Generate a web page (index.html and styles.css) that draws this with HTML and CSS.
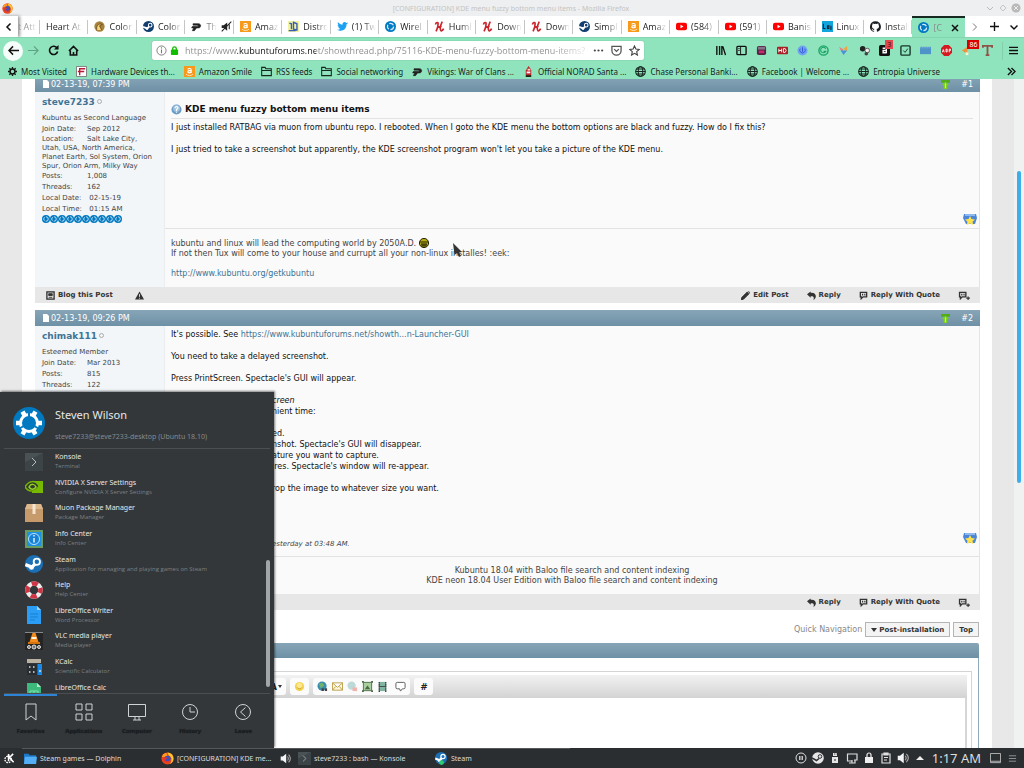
FILE: index.html
```html
<!DOCTYPE html>
<html lang="en">
<head>
    <meta charset="UTF-8">
    <meta name="viewport" content="width=device-width, initial-scale=1.0">
    <title>[CONFIGURATION] KDE menu fuzzy bottom menu items - Mozilla Firefox</title>
    <link rel="stylesheet" href="styles.css">
</head>
<body>
    <!-- shared icons -->
    <svg class="defs" aria-hidden="true">
        <symbol id="firefox" viewBox="0 0 16 16"><circle cx="8" cy="8" r="7.5" fill="#e8441f"/><path d="M8 .6a7.4 7.4 0 0 1 7.4 7.6c0 3-2 5.600-4.500 6.500C14 11 13.500 6 10 4.500 9 3 8 2 8 .6z" fill="#ffc72c"/><path d="M1 6C2 3 4 1.500 6.500 1L8 4l-3 2z" fill="#ff9a1f"/><circle cx="8" cy="8.300" r="3.800" fill="#3b50b8"/><path d="M3 7c2-1 3 0 5 0-1 2-2 1-3 3 2 2 5 1 6.500-.5C11 13 5 14 3 10z" fill="#e5352b"/></symbol>
        <symbol id="amazon" viewBox="0 0 16 16"><path d="M0 0h16v16H0z" fill="#f79a1c"/><path d="M5.500 5c.5-2 5-2 5 .5V10M10.300 6.300C7 6.300 5.500 7 5.500 8.500c0 2 3.500 2 4.800 0" fill="none" stroke="#fff" stroke-width="1.600"/><path d="M3 12c3 2.500 7 2.500 10 0" fill="none" stroke="#fff"/></symbol>
        <symbol id="steam" viewBox="0 0 16 16"><circle cx="8" cy="8" r="8" fill="#123f70"/><circle cx="10.500" cy="6" r="2.600" fill="none" stroke="#fff" stroke-width="1.500"/><path d="M0 8.500l6 2.300L9 8" fill="none" stroke="#fff" stroke-width="2.500"/><circle cx="5.800" cy="11" r="2" fill="#fff"/></symbol>
        <symbol id="steamblue" viewBox="0 0 16 16"><circle cx="8" cy="8" r="8" fill="#1b6fb5"/><circle cx="10.500" cy="6" r="2.800" fill="#1b6fb5" stroke="#fff" stroke-width="1.600"/><path d="M.3 8.500l5.700 2.300L9 8" fill="none" stroke="#fff" stroke-width="3"/><circle cx="5.800" cy="11" r="2.200" fill="#fff"/></symbol>
        <symbol id="pmark" viewBox="0 0 16 16"><path d="M3 4h8c4 0 4 6 0 6H8l-3 4H2l2-4H1L2 8h7c2 0 2-2 0-2H3z" fill="#222" stroke="#222"/></symbol>
        <symbol id="kubuntu" viewBox="0 0 32 32"><circle cx="16" cy="16" r="16" fill="#0079c1"/><circle cx="16" cy="16" r="8.500" fill="none" stroke="#fff" stroke-width="3"/><path d="M20.500 8.200L22.500 4.700M11.500 8.200L9.500 4.700M7 16H3M25 16h4M11.500 23.800l-2 3.500M20.500 23.800l2 3.500" stroke="#fff" stroke-width="4.500"/><path d="M16 5v5M6.500 21.500l4.300-2.500M25.500 21.500l-4.300-2.500" stroke="#0079c1" stroke-width="2"/></symbol>
        <symbol id="pip" viewBox="0 0 16 16"><circle cx="8" cy="8" r="8" fill="#0079c1"/><circle cx="8" cy="8" r="4.500" fill="none" stroke="#d5eafa" stroke-width="1.800" stroke-dasharray="7 2.400"/></symbol>
        <symbol id="humble" viewBox="0 0 16 16"><path d="M2 5c1-3 4-4 4-1 0 4-1 7-3 11M12 1c-2 4-4 10-2 13 1 1 3-1 4-3M5 9l6-1.500" fill="none" stroke="#c9252c" stroke-width="2.400"/></symbol>
        <symbol id="youtube" viewBox="0 0 16 16"><rect y="2.500" width="16" height="11" rx="3" fill="#f00"/><path d="M6.500 5.500v5l4.500-2.500z" fill="#fff"/></symbol>
        <symbol id="github" viewBox="0 0 16 16"><path fill="#1b1f23" d="M8 .2a8 8 0 0 0-2.500 15.600c.4 0 .5-.2.5-.4V14c-2.200.5-2.700-1-2.700-1-.4-.9-.9-1.200-.9-1.200-.7-.5.100-.5.100-.5.800.1 1.200.8 1.200.8.700 1.200 1.900.9 2.300.7 0-.5.300-.9.500-1.100-1.800-.2-3.600-.9-3.600-4 0-.9.300-1.600.8-2.100 0-.2-.4-1 .1-2.100 0 0 .7-.2 2.200.8a7.600 7.600 0 0 1 4 0c1.500-1 2.200-.8 2.200-.8.400 1.100.1 1.900.1 2.100.5.600.8 1.300.8 2.100 0 3.100-1.900 3.700-3.700 3.900.3.300.6.800.6 1.500v2.200c0 .2.100.5.600.4A8 8 0 0 0 8 .2z"/></symbol>
        <symbol id="globe" viewBox="0 0 16 16"><g fill="none" stroke="#16251e" stroke-width="1.500"><circle cx="8" cy="8" r="7"/><ellipse cx="8" cy="8" rx="3.300" ry="7"/><path d="M1 8h14M2 4.500h12M2 11.500h12"/></g></symbol>
        <symbol id="folderline" viewBox="0 0 16 16"><path d="M1 14V2h5l1 2h8v10zM1 6.500h14" fill="none" stroke="#16251e" stroke-width="1.500"/></symbol>
        <symbol id="page" viewBox="0 0 8 8"><path d="M1 0h4l2 2v6H1z" fill="#fff"/></symbol>
        <symbol id="greenup" viewBox="0 0 10 10"><path d="M0 0h10v3H0z" fill="#4fae18"/><path d="M5 2l4 3.500H7V10H3V5.500H1z" fill="#7ed321"/><path d="M5 4v5" stroke="#d4f59d"/></symbol>
        <symbol id="star" viewBox="0 0 14 13"><path d="M1 1h12l1 4-2 6H3L0 5z" fill="#4c86d8"/><path d="M2 1h10v2H2z" fill="#8db8f0"/><path d="M7 3l1.500 3 3.500.4-2.500 2.300.7 3.300L7 10.500 3.800 12l.7-3.300L2 6.400 5.500 6z" fill="#ffe14a"/></symbol>
        <symbol id="reply" viewBox="0 0 10 10"><path d="M0 3.500L4 .5V2c6-1 8 5 3 8 1.500-3 0-4.500-3-4v1.500z" fill="#333"/></symbol>
        <symbol id="quote" viewBox="0 0 10 10"><path d="M1.500 1.500h7v5h-4l-2 2v-2h-1z" fill="none" stroke="#333" stroke-width="1.500"/><path d="M4 3v2M6.500 3v2" stroke="#333" stroke-width="1.300"/></symbol>
        <symbol id="multi" viewBox="0 0 14 10"><path d="M1.500 1.500h7v5h-4l-2 2v-2h-1z" fill="none" stroke="#333" stroke-width="1.500"/><path d="M4 3v2M6.500 3v2" stroke="#333" stroke-width="1.300"/><path d="M9 8h4M11 6v4" stroke="#333" stroke-width="1.300"/></symbol>
        <symbol id="konsole" viewBox="0 0 18 18"><path d="M0 0h18v18H0z" fill="#4a5256"/><path d="M0 9L18 0v18H0z" fill="#3c4448"/><path d="M7 5l4 4-4 4" fill="none" stroke="#b8bfc2"/></symbol>
        <symbol id="volume" viewBox="0 0 16 16"><path d="M1 5h3l5-4v14l-5-4H1z" fill="#f5f5f5"/><path d="M11 5c1.500 2 1.500 4 0 6M12.500 2.500c3.300 3.500 3.300 7.500 0 11" fill="none" stroke="#aaa" stroke-width="1.500"/></symbol>
    </svg>

    <header class="titlebar">
        <svg class="i11"><use href="#firefox"/></svg>
        <span class="title">[CONFIGURATION] KDE menu fuzzy bottom menu items - Mozilla Firefox</span>
        <svg class="winbtns" viewBox="0 0 36 12"><path d="M2 5l3 3 3-3" fill="none" stroke="#bbb"/><path d="M18 3l3 3-3 3-3-3z" fill="none" stroke="#c4c4c4"/><circle cx="31" cy="6" r="4.500" fill="#b8b8b8"/><path d="M29 4l4 4M33 4l-4 4" stroke="#eee"/></svg>
    </header>

    <nav class="tabs" aria-label="Tabs">
        <button class="scroll" aria-label="Scroll left"><svg class="i8" viewBox="0 0 8 8"><path d="M5.500.5L2 4l3.500 3.500" fill="none" stroke="#111" stroke-width="1.500"/></svg></button>
        <a class="tab cut" href="#"><span>t Att</span></a>
        <a class="tab" href="#"><span>Heart At</span></a>
        <a class="tab" href="#"><svg class="i11" viewBox="0 0 16 16"><circle cx="8" cy="8" r="7.500" fill="#a8823b"/><path d="M4 13C3 7 6 3 12 5l-4 2 3 6" fill="#f6d57c" stroke="#4d3510"/></svg><span>Color</span></a>
        <a class="tab" href="#"><svg class="i11"><use href="#steam"/></svg><span>Color</span></a>
        <a class="tab" href="#"><svg class="i11"><use href="#pmark"/></svg><span class="dim">Th</span><svg class="i11" viewBox="0 0 16 16"><path d="M1 6h3l5-4v12l-5-4H1z" fill="#222"/><path d="M1 15L15 1M12 5v7" stroke="#222" stroke-width="1.500"/></svg></a>
        <a class="tab" href="#"><svg class="i11"><use href="#amazon"/></svg><span>Amaz</span></a>
        <a class="tab" href="#"><svg class="i11" viewBox="0 0 16 16"><path d="M0 0h16v16H0z" fill="#f2f3a0"/><path d="M2 3l3 1v8M8 2v10l5 1V4zM1 14h10" fill="none" stroke="#3a5bb8" stroke-width="2"/></svg><span>Distro</span></a>
        <a class="tab" href="#"><svg class="i11" viewBox="0 0 16 16"><path d="M15.500 3.500l-1.600 1.300C14 11 9 15 4 14c-1.500-.2-2.800-.7-3.800-1.300 2 .1 3.500-.4 4.700-1.400-1.500-.2-2.500-1-2.900-2.200h1.400C1.800 8.500 1 7.300 1 5.800l1.400.4C.9 5 .7 3.400 1.500 1.900c2 2.200 4 3.400 6.500 3.500C7.500 2 11.500.3 13.700 2.800l2-.8z" fill="#1da1f2"/></svg><span>(1) Tw</span></a>
        <a class="tab" href="#"><svg class="i11"><use href="#pip"/></svg><span>Wirel</span></a>
        <a class="tab" href="#"><svg class="i11"><use href="#humble"/></svg><span>Huml</span></a>
        <a class="tab" href="#"><svg class="i11"><use href="#humble"/></svg><span>Down</span></a>
        <a class="tab" href="#"><svg class="i11"><use href="#humble"/></svg><span>Down</span></a>
        <a class="tab" href="#"><svg class="i11"><use href="#steam"/></svg><span>Simpl</span></a>
        <a class="tab" href="#"><svg class="i11"><use href="#amazon"/></svg><span>Amaz</span></a>
        <a class="tab" href="#"><svg class="i11"><use href="#youtube"/></svg><span>(584)</span></a>
        <a class="tab" href="#"><svg class="i11"><use href="#youtube"/></svg><span>(591)</span></a>
        <a class="tab" href="#"><svg class="i11"><use href="#youtube"/></svg><span>Banis</span></a>
        <a class="tab" href="#"><svg class="i11" viewBox="0 0 16 16"><path d="M0 0h16v16H0z" fill="#12a5dc"/><path d="M2 4v7h3M8 7v4h2V7zM13 7v6" fill="none" stroke="#123" stroke-width="1.600"/></svg><span>Linux</span></a>
        <a class="tab" href="#"><svg class="i11"><use href="#github"/></svg><span>Install</span></a>
        <a class="tab active" href="#"><svg class="i11"><use href="#pip"/></svg><span class="dim">[C</span><svg class="i8" viewBox="0 0 8 8"><path d="M1 1l6 6M7 1L1 7" stroke="#111" stroke-width="1.500"/></svg></a>
        <div class="tabend">
            <button aria-label="Scroll right"><svg class="i8" viewBox="0 0 8 8"><path d="M2 .5L5.500 4 2 7.500" fill="none" stroke="#777"/></svg></button>
            <button aria-label="New tab"><svg class="i9" viewBox="0 0 10 10"><path d="M5 0v10M0 5h10" stroke="#111" stroke-width="1.500"/></svg></button>
            <button aria-label="List all tabs"><svg class="i8" viewBox="0 0 8 8"><path d="M.5 2.500L4 6l3.500-3.500" fill="none" stroke="#111" stroke-width="1.500"/></svg></button>
        </div>
    </nav>

    <div class="navbar">
        <button class="back" aria-label="Back"><svg class="i11" viewBox="0 0 12 12"><path d="M12 6H1M5.500 1.500L1 6l4.500 4.500" fill="none" stroke="#111" stroke-width="1.600"/></svg></button>
        <button aria-label="Forward"><svg class="i11" viewBox="0 0 12 12"><path d="M0 6h11M6.500 1.500L11 6l-4.500 4.500" fill="none" stroke="#5fa386" stroke-width="1.300"/></svg></button>
        <button aria-label="Reload"><svg class="i11" viewBox="0 0 12 12"><path d="M10 3.500A4.500 4.500 0 1 0 10.500 7" fill="none" stroke="#111" stroke-width="1.800"/><path d="M11.500 0v5h-5z" fill="#111"/></svg></button>
        <button aria-label="Home"><svg class="i11" viewBox="0 0 12 12"><path d="M1 6.500L6 1.500l5 5M2.500 6v5h7V6M6 11V7.500" fill="none" stroke="#111" stroke-width="1.700"/></svg></button>
        <form class="urlbar">
            <svg class="i11" viewBox="0 0 12 12"><circle cx="6" cy="6" r="5" fill="none" stroke="#777"/><path d="M6 5v4M6 2.500v1.300" stroke="#777" stroke-width="1.200"/></svg>
            <svg class="i9" viewBox="0 0 10 10"><rect x="1" y="4" width="8" height="6" rx="1" fill="#12bc00"/><path d="M3 5V3a2 2 0 0 1 4 0v2" fill="none" stroke="#12bc00" stroke-width="1.500"/></svg>
            <input type="text" aria-label="Address" value="https://www.kubuntuforums.net/showthread.php/75116-KDE-menu-fuzzy-bottom-menu-items?p">
            <svg class="i11" viewBox="0 0 12 12"><circle cx="2" cy="6" r="1.200" fill="#444"/><circle cx="6" cy="6" r="1.200" fill="#444"/><circle cx="10" cy="6" r="1.200" fill="#444"/></svg>
            <svg class="i11" viewBox="0 0 12 12"><path d="M1 1.500h10V6a5 5 0 0 1-10 0zM3.500 4.500L6 7l2.500-2.500" fill="none" stroke="#555" stroke-width="1.400"/></svg>
            <svg class="i11" viewBox="0 0 12 12"><path d="M6 1l1.500 3.400 3.700.4-2.800 2.500.8 3.700L6 9.100 2.800 11l.8-3.700L.8 4.800l3.700-.4z" fill="none" stroke="#444" stroke-width="1.200"/></svg>
        </form>
        <div class="tools">
            <svg viewBox="0 0 12 12"><path d="M2 1v10M5 1v10M7.500 1v10M8.500 1.500L11.500 11" stroke="#111" stroke-width="1.500"/></svg>
            <svg viewBox="0 0 12 12"><rect x="1" y="1.500" width="10" height="9" rx="1" fill="none" stroke="#111" stroke-width="1.500"/><path d="M5 2v9M2.500 4H4M2.500 6H4" stroke="#111"/></svg>
            <svg viewBox="0 0 12 12"><rect x="1" y="1" width="10" height="10" rx="2" fill="#53253f"/><path d="M2 2h8v3H2z" fill="#85758a"/><path d="M3 6h6v3H3z" fill="#c52a72"/></svg>
            <svg viewBox="0 0 12 12"><rect y="2" width="12" height="8" rx="1" fill="#a81e26"/><path d="M2 4v4M5 4v4M2 6h3M7 4v4h2l1-2-1-2z" fill="none" stroke="#fff"/></svg>
            <svg viewBox="0 0 12 12"><circle cx="6" cy="6" r="5.500" fill="#6fa3f0"/><path d="M6 2.500v5M3.500 4a3 3 0 1 0 5 0" fill="none" stroke="#3154d6"/></svg>
            <svg viewBox="0 0 12 12"><circle cx="6" cy="6" r="5" fill="none" stroke="#17a367" stroke-width="1.500"/><path d="M8.500 4A3 3 0 1 0 8.500 7H6" fill="none" stroke="#17a367" stroke-width="1.200"/></svg>
            <svg viewBox="0 0 12 12"><path d="M1 2l5 3-2 3z" fill="#ed7a86"/><path d="M6 4l4-3v6z" fill="#f2a33c"/><path d="M3 6h7l-4 5z" fill="#4c91dc"/></svg>
            <svg viewBox="0 0 12 12"><circle cx="4" cy="4" r="3" fill="#222"/><circle cx="9" cy="6" r="2.500" fill="#eee" stroke="#555"/><circle cx="8" cy="9.500" r="2" fill="#444"/></svg>
            <span class="ext"><svg viewBox="0 0 12 12"><rect width="12" height="12" rx="2" fill="#111"/><path d="M4 3.500h4V9M8 6H4.500v2.500H8" fill="none" stroke="#fff" stroke-width="1.500"/></svg><b class="badge pink">3</b></span>
            <svg viewBox="0 0 12 12"><rect x="1" y="1" width="10" height="10" rx="1" fill="none" stroke="#14362a" stroke-width="1.500"/><path d="M3.500 6l2 2 3-4" fill="none" stroke="#14362a"/></svg>
            <svg viewBox="0 0 12 12"><path d="M0 2h12v8H0z" fill="#4f94c8"/><path d="M0 3h12" stroke="#91c1e1" stroke-dasharray="1 1"/></svg>
            <svg viewBox="0 0 12 12"><path d="M3.500 0h5L12 3.500v5L8.500 12h-5L0 8.500v-5z" fill="#d31a20"/><path d="M1.500 8l1-3 1 3M5.500 4.500v3h1.200v-3zM9 8V4.500h1.300V6H9" fill="none" stroke="#fff"/></svg>
            <span class="ext"><svg viewBox="0 0 12 12"><path d="M1 6l6-4v8z" fill="#f0933e"/><path d="M5 8h3v3H5z" fill="#fff0cc"/></svg><b class="badge">86</b></span>
            <svg viewBox="0 0 12 12"><path d="M1 3V1h10v2M6 1v10M4 11h4" fill="none" stroke="#8e5248" stroke-width="2"/></svg>
        </div>
        <button class="burger" aria-label="Menu"><svg class="i9" viewBox="0 0 10 10"><path d="M0 1.500h10M0 5h10M0 8.500h10" stroke="#111" stroke-width="1.400"/></svg></button>
    </div>

    <nav class="bookmarks" aria-label="Bookmarks">
        <a href="#"><svg class="i9" viewBox="0 0 10 10"><circle cx="5" cy="5" r="2.700" fill="none" stroke="#111" stroke-width="1.600"/><path d="M5 0v2M5 8v2M0 5h2M8 5h2M1.500 1.500l1.300 1.300M7.200 7.200l1.300 1.300M8.500 1.500L7.200 2.800M2.800 7.200L1.500 8.500" stroke="#111" stroke-width="1.500"/></svg>Most Visited</a>
        <a href="#"><svg class="i11" viewBox="0 0 12 12"><path d="M.5.5h11v11H.5z" fill="#fff" stroke="#777"/><path d="M4 10V3h6M2 6h7" fill="none" stroke="#b81d38" stroke-width="1.500"/></svg>Hardware Devices th...</a>
        <a href="#"><svg class="i11"><use href="#amazon"/></svg>Amazon Smile</a>
        <a href="#"><svg class="i11"><use href="#folderline"/></svg>RSS feeds</a>
        <a href="#"><svg class="i11"><use href="#folderline"/></svg>Social networking</a>
        <a href="#"><svg class="i11"><use href="#pmark"/></svg>Vikings: War of Clans ...</a>
        <a href="#"><svg class="i11" viewBox="0 0 12 12"><path d="M6 0l3 4v6l-3 2-3-2V5z" fill="#b7282e"/><path d="M5 3h3v2H5z" fill="#f5d8ca"/><path d="M4 6h4v2H4z" fill="#fff"/><path d="M3 10h6v2H3z" fill="#221"/></svg>Official NORAD Santa ...</a>
        <a href="#"><svg class="i11"><use href="#globe"/></svg>Chase Personal Banki...</a>
        <a href="#"><svg class="i11"><use href="#globe"/></svg>Facebook | Welcome ...</a>
        <a href="#"><svg class="i11"><use href="#globe"/></svg>Entropia Universe</a>
        <button class="more" aria-label="More bookmarks"><svg class="i9" viewBox="0 0 10 10"><path d="M1 1l4 4-4 4M5 1l4 4-4 4" fill="none" stroke="#111" stroke-width="1.500"/></svg></button>
    </nav>

    <div class="viewport">
        <main class="page">
            <article class="post">
                <div class="posthead"><svg class="i8"><use href="#page"/></svg><span>02-13-19, 07:39 PM</span><svg class="i9 up"><use href="#greenup"/></svg><a href="#">#1</a></div>
                <div class="postbody">
                    <aside class="user">
                        <a class="username" href="#">steve7233</a> <i class="offline"></i>
                        <p class="rank">Kubuntu as Second Language</p>
                        <p><span>Join Date:</span>Sep 2012</p>
                        <p class="where"><span>Location:</span>Salt Lake City, Utah, USA, North America, Planet Earth, Sol System, Orion Spur, Orion Arm, Milky Way</p>
                        <p><span>Posts:</span>1,008</p>
                        <p><span>Threads:</span>162</p>
                        <p><span>Local Date:</span> 02-15-19</p>
                        <p><span>Local Time:</span> 01:15 AM</p>
                        <div class="pips">
                            <svg><use href="#pip"/></svg><svg><use href="#pip"/></svg><svg><use href="#pip"/></svg><svg><use href="#pip"/></svg><svg><use href="#pip"/></svg><svg><use href="#pip"/></svg><svg><use href="#pip"/></svg><svg><use href="#pip"/></svg><svg><use href="#pip"/></svg><svg><use href="#pip"/></svg>
                        </div>
                    </aside>
                    <div class="message">
                        <div class="text first">
                            <h2><svg class="i11" viewBox="0 0 12 12"><circle cx="6" cy="6" r="5.500" fill="#6b9cc6"/><circle cx="6" cy="5" r="3.800" fill="#9dc0dd"/><path d="M4.500 4.500C4.500 2 8 2.500 7.500 4.500L6 6v1.500M6 8.500v1" fill="none" stroke="#fff" stroke-width="1.300"/></svg>KDE menu fuzzy bottom menu items</h2>
                            <p>I just installed RATBAG via muon from ubuntu repo. I rebooted. When I goto the KDE menu the bottom options are black and fuzzy. How do I fix this?</p>
                            <p>I just tried to take a screenshot but apparently, the KDE screenshot program won't let you take a picture of the KDE menu.</p>
                        </div>
                        <svg class="award"><use href="#star"/></svg>
                        <div class="sig">
                            kubuntu and linux will lead the computing world by 2050A.D. <svg class="smiley" viewBox="0 0 10 10"><circle cx="5" cy="5" r="4.600" fill="#b8ab14" stroke="#252505"/><path d="M1 4h8M2 6h6M3 8h4M3 6v2M5 6v2M7 6v2" stroke="#252505"/></svg><br>
                            If not then Tux will come to your house and currupt all your non-linux installes! :eek:<br><br>
                            <a href="#">http://www.kubuntu.org/getkubuntu</a>
                        </div>
                    </div>
                </div>
                <div class="postfoot">
                    <button><svg class="i9" viewBox="0 0 10 10"><rect x="1" y="1" width="8" height="8" fill="none" stroke="#333" stroke-width="1.500"/><path d="M3 3h4v2H3zM3 7h4" stroke="#333" fill="#333"/></svg>Blog this Post</button>
                    <button class="warn" aria-label="Report"><svg class="i9" viewBox="0 0 10 10"><path d="M5 .5L10 9.500H0z" fill="#333"/><path d="M5 3.500v3M5 7.500v1" stroke="#eee"/></svg></button>
                    <div class="right">
                        <button><svg class="i9" viewBox="0 0 10 10"><path d="M0 10l1-3 6-6 2 2-6 6zM8 0l2 2" fill="#333" stroke="#333"/></svg>Edit Post</button>
                        <button><svg class="i9"><use href="#reply"/></svg>Reply</button>
                        <button><svg class="i9"><use href="#quote"/></svg>Reply With Quote</button>
                        <button aria-label="Multi-quote"><svg class="wide"><use href="#multi"/></svg></button>
                    </div>
                </div>
            </article>

            <article class="post">
                <div class="posthead"><svg class="i8"><use href="#page"/></svg><span>02-13-19, 09:26 PM</span><svg class="i9 up"><use href="#greenup"/></svg><a href="#">#2</a></div>
                <div class="postbody">
                    <aside class="user">
                        <a class="username" href="#">chimak111</a> <i class="offline"></i>
                        <p class="rank">Esteemed Member</p>
                        <p><span>Join Date:</span>Mar 2013</p>
                        <p><span>Posts:</span>815</p>
                        <p><span>Threads:</span>122</p>
                        <p><span>Local Date:</span> 02-15-19</p>
                    </aside>
                    <div class="message">
                        <div class="text second">
                            <p>It's possible. See <a href="#">https://www.kubuntuforums.net/showth...n-Launcher-GUI</a></p>
                            <p>You need to take a delayed screenshot.</p>
                            <p>Press PrintScreen. Spectacle's GUI will appear.</p>
                            <!-- these lines run under the launcher -->
                            <div class="under">
                                <p><i>creen</i><br>nient time:</p>
                                <p>ed.<br>nshot. Spectacle's GUI will disappear.<br>ature you want to capture.<br>ires. Spectacle's window will re-appear.</p>
                                <p>rop the image to whatever size you want.</p>
                            </div>
                        </div>
                        <div class="edited"><i>esterday at 03:48 AM.</i><svg class="award"><use href="#star"/></svg></div>
                        <div class="sig center">Kubuntu 18.04 with Baloo file search and content indexing<br>KDE neon 18.04 User Edition with Baloo file search and content indexing</div>
                    </div>
                </div>
                <div class="postfoot">
                    <div class="right">
                        <button><svg class="i9"><use href="#reply"/></svg>Reply</button>
                        <button><svg class="i9"><use href="#quote"/></svg>Reply With Quote</button>
                        <button aria-label="Multi-quote"><svg class="wide"><use href="#multi"/></svg></button>
                    </div>
                </div>
            </article>

            <div class="quicknav">
                <span>Quick Navigation</span>
                <button><svg viewBox="0 0 6 4"><path d="M0 0h6L3 4z" fill="#333"/></svg>Post-installation</button>
                <button>Top</button>
            </div>

            <section class="quickreply">
                <div class="qrhead"></div>
                <div class="editor">
                    <div class="inner">
                        <div class="edbar">
                            <div class="grp"><button aria-label="Colour">A<svg viewBox="0 0 4 3"><path d="M0 0h4L2 3z" fill="#333"/></svg></button></div>
                            <div class="grp"><svg class="i11" viewBox="0 0 12 12"><circle cx="6" cy="6" r="5" fill="#f4d24e"/><circle cx="6" cy="5" r="3" fill="#fbe890"/><path d="M3.500 7c1 2 4 2 5 0" fill="none" stroke="#c9a43c"/></svg></div>
                            <div class="grp">
                                <svg class="i11" viewBox="0 0 12 12"><circle cx="5.500" cy="5.500" r="5" fill="#3b8eb0"/><path d="M2 3l4-1 2 3-4 3z" fill="#6fb36c"/><path d="M5 9.500h6" stroke="#444" stroke-width="3" stroke-dasharray="2.500 1"/></svg>
                                <svg class="i11" viewBox="0 0 12 12"><path d="M.5 2h11v8H.5zM.5 2L6 7l5.500-5M.5 10L4 6M11.500 10L8 6" fill="#fff8dc" stroke="#b99d45"/></svg>
                                <svg class="i11" viewBox="0 0 12 12"><circle cx="5" cy="5" r="4.500" fill="#bdd9d8"/><path d="M6 7h5v4H6z" fill="#efb3b0"/></svg>
                                <svg class="i11" viewBox="0 0 12 12"><path d="M1.500 1.500h9v9h-9z" fill="#a8cf9c" stroke="#4f6d48"/><path d="M3 9l3-4 3 4zM0 0h2v2H0zM10 0h2v2h-2zM0 10h2v2H0zM10 10h2v2h-2z" fill="#4b6848"/></svg>
                                <svg class="i11" viewBox="0 0 12 12"><path d="M2 1h8v10H2z" fill="#7fb4a1"/><path d="M2.500 1v11M9.500 1v11" stroke="#444" stroke-width="1.500" stroke-dasharray="1.500 .5"/><path d="M3 6h6" stroke="#444"/></svg>
                                <svg class="i11 say" viewBox="0 0 12 12"><path d="M2.500 1.500h7q1.500 0 1.500 1.500v4q0 1.500-1.500 1.500H8l-2 2.500-1-2.500H2.500Q1 8.500 1 7V3q0-1.500 1.500-1.500z" fill="#fff" stroke="#555"/></svg>
                            </div>
                            <div class="grp"><button aria-label="Code"><i>#</i></button></div>
                        </div>
                        <textarea aria-label="Quick reply"></textarea>
                    </div>
                </div>
            </section>
        </main>
        <div class="scrolltrack"><div class="thumb"></div></div>
    </div>

    <svg class="cursor" viewBox="0 0 10 15"><path d="M0 0l9 9-3 .5L8 13l-2 1-2-4-2.500 2z" fill="#333"/></svg>

    <section class="launcher" aria-label="Application launcher">
        <div class="who">
            <svg><use href="#kubuntu"/></svg>
            <div><h1>Steven Wilson</h1><p>steve7233@steve7233-desktop (Ubuntu 18.10)</p></div>
        </div>
        <div class="listwrap">
            <ul>
                <li><svg><use href="#konsole"/></svg><div>Konsole<small>Terminal</small></div></li>
                <li><svg viewBox="0 0 18 18"><path d="M7 3h11v12H7z" fill="#76b900"/><path d="M0 9c4-7 11-7 14-1-3 6-10 7-14 1z" fill="#313a2a" stroke="#76b900" stroke-width="1.500"/><path d="M4 9c2-4 6-3 7 0-2 3-5 3-7 0z" fill="none" stroke="#93d127" stroke-width="1.500"/></svg><div>NVIDIA X Server Settings<small>Configure NVIDIA X Server Settings</small></div></li>
                <li><svg viewBox="0 0 18 18"><path d="M2 0h14l2 5v13H0V5z" fill="#c79a6b"/><path d="M2 0h14l2 5H0z" fill="#ddb88d"/><path d="M7.500 0h3v10h-3z" fill="#f3e5cf"/></svg><div>Muon Package Manager<small>Package Manager</small></div></li>
                <li><svg viewBox="0 0 18 18"><path d="M0 0h18v18H0z" fill="#699b65"/><path d="M2 2h14v14H2z" fill="#2090e0"/><circle cx="9" cy="9" r="5.500" fill="#1682d6" stroke="#b9e2ff"/><path d="M9 8v4.500M9 5v1.500" stroke="#fff" stroke-width="1.300"/></svg><div>Info Center<small>Info Center</small></div></li>
                <li><svg><use href="#steamblue"/></svg><div>Steam<small>Application for managing and playing games on Steam</small></div></li>
                <li><svg viewBox="0 0 18 18"><circle cx="9" cy="9" r="6.500" fill="none" stroke="#eee" stroke-width="4.500"/><circle cx="9" cy="9" r="6.500" fill="none" stroke="#cf3545" stroke-width="4.500" stroke-dasharray="6.200 4" stroke-dashoffset="3.100"/></svg><div>Help<small>Help Center</small></div></li>
                <li><svg viewBox="0 0 18 18"><path d="M2 0h10l4 4v14H2z" fill="#2b9df4"/><path d="M12 0v4h4z" fill="#9ed5ff"/><path d="M5 8h8M5 11h8M5 14h5" stroke="#1881cf"/></svg><div>LibreOffice Writer<small>Word Processor</small></div></li>
                <li><svg viewBox="0 0 18 18"><path d="M0 0h18v18H0z" fill="#252525"/><path d="M0 .5h18" stroke="#888"/><path d="M7.500 1h3l3 9h-9z" fill="#f28b1a"/><path d="M6.500 5h5v2h-5z" fill="#fff2dd"/><path d="M3 10h12v2H3z" fill="#d6720e"/><g fill="#777" stroke="#ddd"><circle cx="4" cy="15" r="1.500"/><circle cx="9" cy="15" r="2"/><circle cx="14" cy="15" r="1.500"/></g></svg><div>VLC media player<small>Media player</small></div></li>
                <li><svg viewBox="0 0 18 18"><path d="M2 1h14v4H2z" fill="#b9b0a2"/><path d="M2 6h10v11H2z" fill="#272d31"/><path d="M12.500 6H17v11h-4.500z" fill="#1689e8"/><path d="M4 9h1.500M8 9h1.500M4 14h1.500M8 14h1.500M14 13h2" stroke="#ddd" stroke-width="1.500"/></svg><div>KCalc<small>Scientific Calculator</small></div></li>
                <li><svg viewBox="0 0 18 18"><path d="M2 0h10l4 4v14H2z" fill="#3db97c"/><path d="M12 0v4h4z" fill="#b2ecca"/><path d="M5 8h8v7H5zM9 8v7M5 11h8" fill="none" stroke="#7de0aa"/></svg><div>LibreOffice Calc</div></li>
            </ul>
            <div class="listbar"></div>
        </div>
        <div class="places">
            <button class="on"><svg viewBox="0 0 18 18"><path d="M4 1h10v16l-5-4-5 4z"/></svg><span>Favorites</span></button>
            <button><svg viewBox="0 0 18 18"><path d="M1 1h6v6H1zM11 1h6v6h-6zM1 11h6v6H1zM11 11h6v6h-6z"/></svg><span>Applications</span></button>
            <button><svg viewBox="0 0 18 18"><path d="M.5 1.500h17v12H.5zM7 14v3M11 14v3M5 17h8"/></svg><span>Computer</span></button>
            <button><svg viewBox="0 0 18 18"><circle cx="9" cy="9" r="7.500"/><path d="M9 4v5h5"/></svg><span>History</span></button>
            <button><svg viewBox="0 0 18 18"><circle cx="9" cy="9" r="7.500"/><path d="M11.500 4.500L6.500 9l5 4.500"/></svg><span>Leave</span></button>
        </div>
    </section>

    <footer class="taskbar">
        <button class="kde" aria-label="Launcher"><svg class="i11" viewBox="0 0 12 12"><circle cx="4.500" cy="7" r="3.500" fill="none" stroke="#fff" stroke-width="1.500" stroke-dasharray="1.800 1"/><path d="M5 1v8M5.500 5.500L10 1M6 5l4.500 5" stroke="#fff" stroke-width="1.700"/></svg></button>
        <button class="task"><svg class="i13" viewBox="0 0 14 14"><path d="M0 2h5l1 1.500h7V13H0z" fill="#1d78c8"/><path d="M1 5h13l-1 8H0z" fill="#54aef5"/></svg>Steam games — Dolphin</button>
        <button class="task"><svg class="i13"><use href="#firefox"/></svg>[CONFIGURATION] KDE me...<svg class="i11 snd"><use href="#volume"/></svg></button>
        <button class="task"><svg class="i13"><use href="#konsole"/></svg>steve7233 : bash — Konsole</button>
        <button class="task"><svg class="i13" viewBox="0 0 16 16"><use href="#steamblue" width="15" height="15"/><circle cx="8" cy="13" r="3" fill="#2ecc71"/></svg>Steam</button>
        <div class="tray">
            <svg viewBox="0 0 12 12"><circle cx="6" cy="6" r="5" fill="none" stroke="#ddd"/><path d="M4.800 4v4M7.200 4v4" stroke="#ddd" stroke-width="1.300"/></svg>
            <svg viewBox="0 0 12 12"><circle cx="6" cy="6" r="5.800" fill="#e6e6e6"/><circle cx="8" cy="4.500" r="1.800" fill="none" stroke="#2b2e31"/><path d="M0 6l4.500 2.500L7 6.500" fill="none" stroke="#2b2e31" stroke-width="1.500"/></svg>
            <svg viewBox="0 0 12 12"><path d="M4 1h4v3H4zM3 5h6v6H3z" fill="#e6e6e6"/><path d="M5 2h.8M6.700 2h.8M5 8h2" stroke="#222"/></svg>
            <svg viewBox="0 0 12 12"><path d="M1.500 2v7H6M1 2h10v6H8M6 8v3h3V8M3 11h5" fill="none" stroke="#ddd" stroke-width="1.200"/></svg>
            <svg viewBox="0 0 12 12"><path d="M2 5h8v6H2z" fill="#eee"/><path d="M4 5V3a2 2 0 0 1 4 0v2" fill="none" stroke="#eee" stroke-width="1.200"/></svg>
            <svg viewBox="0 0 12 12"><path d="M2 2h8v9H2zM4 1h4v2H4zM4 5.500h4M4 8h3" fill="none" stroke="#e0e0e0" stroke-width="1.200"/></svg>
            <svg viewBox="0 0 16 16"><use href="#volume" width="16" height="16"/></svg>
            <svg viewBox="0 0 12 12"><path d="M6 4l4 4H2z" fill="#eee"/></svg>
        </div>
        <time>1:17 AM</time>
        <svg class="i11 desk" viewBox="0 0 12 12"><path d="M.5.5h11v10H.5zM.500 9h11" fill="none" stroke="#bbb"/></svg>
        <svg class="i9" viewBox="0 0 10 10"><path d="M1 2h8M1 5h8M1 8h8" stroke="#999"/></svg>
    </footer>
</body>
</html>
```
FILE: styles.css
```css
* {
    box-sizing: border-box;
}
body {
    margin: 0;
    height: 100vh;
    display: flex;
    flex-direction: column;
    overflow: hidden;
    position: relative;
    background: #e8e8e8;
    font-family: "Noto Sans", sans-serif;
    font-size: 9px;
    color: #222;
}
svg {
    flex: none;
}
button {
    border: 0;
    padding: 0;
    background: none;
    font: inherit;
    color: inherit;
    display: flex;
    align-items: center;
    justify-content: center;
}
a {
    color: inherit;
    text-decoration: none;
}
p, h1, h2, ul {
    margin: 0;
    padding: 0;
}
.defs {
    position: absolute;
    width: 0;
    height: 0;
}
.i8 { width: 8px; height: 8px; }
.i9 { width: 9px; height: 9px; }
.i11 { width: 11px; height: 11px; }
.i13 { width: 13px; height: 13px; }

/* browser window */
.titlebar {
    flex: none;
    height: 16px;
    padding: 0 3px 0 2px;
    display: flex;
    align-items: center;
    background: #eeeff0;
    font-size: 7px;
    color: #c3c4c5;
}
.title {
    flex: 1;
    padding-left: 24px;
    text-align: center;
}
.winbtns {
    width: 36px;
    height: 12px;
}
.tabs {
    flex: none;
    height: 21px;
    display: flex;
    background: #fff;
    font-family: "Open Sans", sans-serif;
}
.scroll {
    width: 18px;
    box-shadow: 2px 0 3px #999;
}
.tab {
    flex: 1;
    min-width: 0;
    display: flex;
    align-items: center;
    gap: 4px;
    padding: 0 2px 0 6px;
    overflow: hidden;
    background: linear-gradient(#c5c5c5, #c5c5c5) right center / 1px 14px no-repeat;
}
.tab span {
    flex: 1;
    min-width: 0;
    overflow: hidden;
    white-space: nowrap;
    mask-image: linear-gradient(to right, #000 45%, transparent 95%);
}
.tab .dim {
    color: #888;
}
.tab.cut {
    flex: none;
    width: 22px;
    padding: 0 1px 0 0;
    color: #999;
}
.tab.active {
    padding-right: 6px;
    background: #90e4bd;
    border-top: 2px solid #172a22;
}
.tabend {
    width: 59px;
    display: flex;
    align-items: center;
    justify-content: space-around;
}
.navbar {
    flex: none;
    height: 26px;
    display: flex;
    align-items: center;
    gap: 9px;
    padding: 0 7px 0 3px;
    background: #90e4bd;
    border-top: 1px solid #82d5ad;
}
.back {
    width: 20px;
    height: 20px;
    border-radius: 50%;
    background: #f4fdf9;
    margin-right: -4px;
}
.urlbar {
    width: 492px;
    height: 19px;
    margin-left: 64px;
    padding: 0 4px;
    display: flex;
    align-items: center;
    gap: 7px;
    background: #fff;
    border-radius: 2px;
    box-shadow: 0 0 1px #4d8a6d;
}
.urlbar .i9 {
    margin-left: -4px;
    margin-right: -1px;
}
.urlbar input {
    flex: 1;
    min-width: 0;
    border: 0;
    padding: 0;
    outline: 0;
    font-family: "Open Sans", sans-serif;
    font-size: 9px;
    color: transparent;
    background: linear-gradient(to right, #8a8a8a 51px, #111 51px 131px, #8a8a8a 131px 365px, #ddd 395px);
    background-clip: text;
    -webkit-background-clip: text;
}
.tools {
    flex: 1;
    margin-left: 62px;
    display: flex;
    align-items: center;
    justify-content: space-between;
}
.tools svg {
    display: block;
    width: 11px;
    height: 11px;
}
.ext {
    position: relative;
}
.badge {
    position: absolute;
    left: 6px;
    top: -5px;
    padding: 0 2px;
    font-size: 7px;
    line-height: 9px;
    font-weight: normal;
    color: #fff;
    background: #d90000;
}
.badge.pink {
    background: #e0474c;
    color: #3b0d10;
}
.burger {
    width: 15px;
    height: 18px;
    padding-left: 6px;
    border-left: 1px solid #84d0ad;
}
.bookmarks {
    flex: none;
    height: 16px;
    padding: 0 8px;
    display: flex;
    align-items: center;
    gap: 9px;
    background: #90e4bd;
    font-size: 8px;
    white-space: nowrap;
    color: #16251e;
}
.bookmarks a {
    display: flex;
    align-items: center;
    gap: 4px;
}
.more {
    margin-left: auto;
}

/* forum page */
.viewport {
    flex: 1;
    min-height: 0;
    display: flex;
    overflow: hidden;
    font-family: "DejaVu Sans", Verdana, sans-serif;
    font-size: 8px;
}
.page {
    flex: 1;
    margin: -3px 22px 0;
    padding: 0 12px 0 13px;
    background: #fff;
    display: flex;
    flex-direction: column;
}
.scrolltrack {
    width: 10px;
    padding: 92px 3px 0;
    background: #f0f1f1;
}
.thumb {
    height: 312px;
    border-radius: 2px;
    background: #3daee9;
}
.post {
    margin-bottom: 7px;
}
.posthead {
    height: 16px;
    padding: 0 7px;
    display: flex;
    align-items: center;
    gap: 1px;
    color: #fff;
    background: linear-gradient(#87a5b7, #6e90a5);
}
.posthead .up {
    margin-left: auto;
    margin-right: 10px;
}
.postbody {
    display: flex;
    background: #fafafa;
    border-right: 1px solid #e4e4e4;
}
.user {
    width: 130px;
    padding: 5px 8px 0 7px;
    background: #f2f6f9;
    border-right: 1px solid #eaeef0;
    font-size: 7px;
    line-height: 11px;
    color: #444;
}
.username {
    font-size: 9px;
    font-weight: bold;
    color: #417394;
}
.offline {
    display: inline-block;
    width: 5px;
    height: 5px;
    border: 1px solid #aaa;
    border-radius: 50%;
    vertical-align: 1px;
}
.user p span {
    display: inline-block;
    min-width: 45px;
}
.user .rank {
    margin-top: 4px;
}
.user .where {
    line-height: 9px;
}
.pips {
    display: flex;
}
.pips svg {
    width: 8px;
    height: 8px;
}
.message {
    flex: 1;
    display: flex;
    flex-direction: column;
    line-height: 11px;
    color: #111;
}
.message a {
    color: #417394;
}
.text {
    padding: 0 6px;
}
.text p {
    margin-bottom: 11px;
}
.text.first {
    padding-top: 11px;
    min-height: 121px;
}
.text h2 {
    display: flex;
    align-items: center;
    gap: 3px;
    margin-bottom: 3px;
    padding-bottom: 3px;
    border-bottom: 1px solid #e2e2e2;
    font-size: 9px;
    line-height: 12px;
}
.text.second {
    padding-top: 3px;
    min-height: 206px;
}
.under {
    padding-left: 101px;
}
.award {
    width: 14px;
    height: 13px;
    margin-left: auto;
    margin-right: 2px;
}
.edited {
    display: flex;
    align-items: center;
    height: 24px;
    padding-left: 107px;
    font-size: 7px;
    color: #444;
}
.edited .award {
    align-self: flex-start;
}
.sig {
    margin-top: 2px;
    padding: 9px 6px 8px;
    border-top: 1px solid #e2e2e2;
    line-height: 10px;
    color: #444;
}
.sig.center {
    text-align: center;
    margin-top: 0;
}
.smiley {
    width: 10px;
    height: 10px;
    vertical-align: -2px;
}
.postfoot {
    height: 16px;
    padding: 0 9px 0 11px;
    display: flex;
    align-items: center;
    gap: 22px;
    background: #e7e7e7;
    font-size: 7px;
    font-weight: bold;
    color: #333;
}
.postfoot button {
    gap: 3px;
}
.right {
    margin-left: auto;
    display: flex;
    gap: 18px;
}
.wide {
    width: 13px;
    height: 9px;
}
.quicknav {
    display: flex;
    align-items: center;
    justify-content: flex-end;
    gap: 3px;
    margin-top: 5px;
    padding-right: 1px;
    color: #888;
}
.quicknav button {
    height: 15px;
    padding: 0 5px;
    gap: 2px;
    border: 1px solid #b5b5b5;
    background: #f4f4f4;
    font-size: 7px;
    font-weight: bold;
    color: #333;
}
.quicknav button svg {
    width: 6px;
    height: 4px;
}
.quickreply {
    flex: 1;
    display: flex;
    flex-direction: column;
    margin: 6px 1px 0 0;
}
.qrhead {
    height: 15px;
    border-radius: 2px 2px 0 0;
    background: linear-gradient(#87a5b7, #6e90a5);
}
.editor {
    flex: 1;
    display: flex;
    padding: 13px 6px 0;
    border-right: 1px solid #8fabbb;
}
.inner {
    flex: 1;
    display: flex;
    flex-direction: column;
    padding: 3px 4px 0;
    border: 1px solid #d4d4d4;
    border-bottom: 0;
}
.edbar {
    height: 23px;
    padding: 0 0 0 220px;
    display: flex;
    align-items: center;
    gap: 4px;
    background: linear-gradient(#f2f2f2, #d3d3d3);
}
.grp {
    height: 17px;
    padding: 0 4px;
    display: flex;
    align-items: center;
    gap: 4px;
    background: #fbfbfb;
    border-radius: 3px;
}
.grp button {
    min-width: 11px;
    gap: 1px;
    font-size: 9px;
    font-weight: bold;
}
.grp button svg {
    width: 4px;
    height: 3px;
}
.say {
    margin-left: 3px;
}
.inner textarea {
    flex: 1;
    min-height: 0;
    border: 0;
    border-right: 2px solid #d6d6d6;
    resize: none;
    outline: 0;
}
.cursor {
    position: absolute;
    left: 453px;
    top: 243px;
    width: 10px;
    height: 15px;
}

/* application launcher, floats above the page */
.launcher {
    position: absolute;
    left: 0;
    bottom: 20px;
    width: 274px;
    height: 356px;
    display: flex;
    flex-direction: column;
    background: #33373a;
    color: #e6e8e9;
    box-shadow: 1px -1px 2px rgba(0, 0, 0, 0.5);
    font-size: 7px;
}
.who {
    height: 57px;
    margin: 0 4px;
    padding: 15px 9px 0;
    display: flex;
    gap: 10px;
    border-bottom: 1px solid #4b4f52;
}
.who svg {
    width: 32px;
    height: 32px;
}
.who h1 {
    font-size: 11px;
    line-height: 16px;
    font-weight: normal;
}
.who p {
    margin-top: 8px;
    line-height: 12px;
    color: #868a8d;
}
.listwrap {
    flex: 1;
    min-height: 0;
    margin: 0 4px;
    display: flex;
    overflow: hidden;
    border-bottom: 1px solid #4b4f52;
}
.launcher ul {
    flex: 1;
    height: 256px;
    display: grid;
    grid-auto-rows: 1fr;
    list-style: none;
}
.launcher li {
    display: flex;
    align-items: center;
    gap: 12px;
    padding-left: 21px;
    line-height: 10px;
}
.launcher li svg {
    width: 18px;
    height: 18px;
}
.launcher small {
    display: block;
    font-family: "Open Sans", sans-serif;
    font-size: 6px;
    line-height: 9px;
    color: #7c8083;
}
.launcher li:last-child div {
    padding-bottom: 9px;
}
.listbar {
    align-self: flex-end;
    width: 4px;
    height: 127px;
    margin-bottom: 6px;
    border-radius: 2px;
    background: #a3a6a8;
}
.places {
    height: 54px;
    padding: 0 4px;
    display: flex;
}
.places button {
    flex: 1;
    flex-direction: column;
    justify-content: flex-start;
    padding-top: 9px;
    gap: 6px;
}
.places .on {
    border-top: 2px solid #2d84d6;
    padding-top: 7px;
}
.places svg {
    width: 18px;
    height: 18px;
    fill: none;
    stroke: #d0d3d5;
}
.places span {
    font-size: 6px;
    line-height: 9px;
    font-weight: bold;
    color: #1a1d1f;
    text-shadow: 0 0 1px #1a1d1f;
}

/* panel */
.taskbar {
    flex: none;
    height: 20px;
    padding: 0 7px 0 4px;
    display: flex;
    align-items: center;
    background: #2b2e31;
    color: #dcdddd;
    z-index: 1;
}
.kde {
    width: 18px;
    justify-content: flex-start;
}
.task {
    height: 20px;
    justify-content: flex-start;
    gap: 3px;
    padding-left: 2px;
    width: 137px;
    font-size: 7px;
    white-space: nowrap;
    border-top: 1px solid #54585b;
}
.snd {
    margin-left: auto;
    margin-right: 5px;
}
.tray {
    margin-left: auto;
    display: flex;
    gap: 5px;
}
.tray svg {
    width: 12px;
    height: 12px;
}
.taskbar time {
    margin: 0 9px 0 6px;
    font-size: 13px;
}
.desk {
    margin-right: 7px;
}
```
